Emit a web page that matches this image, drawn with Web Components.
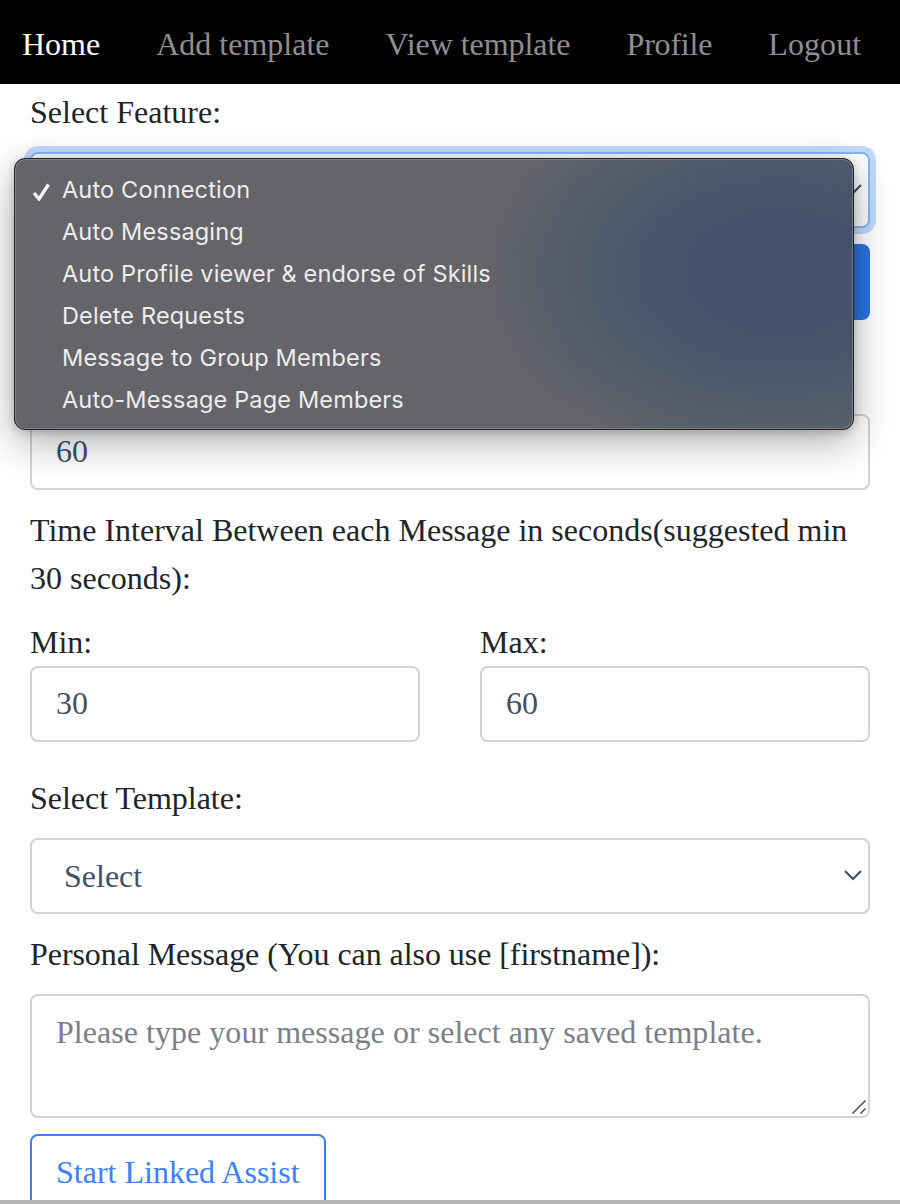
<!DOCTYPE html>
<html lang="en"><head><meta charset="utf-8"><title>Linked Assist</title>
<style>
html,body{margin:0;padding:0;height:1204px;overflow:hidden;background:#fff}
body{display:grid;grid-template-rows:1fr 4px;font:32px/48px "Liberation Serif","Times New Roman",serif;color:#212529;position:relative}
</style></head><body>
<app-shell>
  <app-nav>
    <nav-link active>Home</nav-link><nav-link>Add template</nav-link><nav-link style="letter-spacing:-.04px">View template</nav-link><nav-link style="letter-spacing:-.2px">Profile</nav-link><nav-link style="letter-spacing:.1px">Logout</nav-link>
  </app-nav>
  <form-body>
    <field-label>Select Feature:</field-label>
    <select-box focused></select-box>
    <action-row></action-row>
    <text-box style="margin-top:94px">60</text-box>
    <field-label style="margin-top:16px">Time Interval Between each Message in seconds(suggested min 30 seconds):</field-label>
    <two-cols>
      <div><field-label flush>Min:</field-label><text-box>30</text-box></div>
      <div><field-label flush>Max:</field-label><text-box>60</text-box></div>
    </two-cols>
    <field-label style="margin-top:32px;letter-spacing:-.02px">Select Template:</field-label>
    <select-box>Select</select-box>
    <field-label style="margin-top:16px;letter-spacing:-.06px">Personal Message (You can also use [firstname]):</field-label>
    <area-box>Please type your message or select any saved template.</area-box>
    <outline-button>Start Linked Assist</outline-button>
  </form-body>
</app-shell>
<window-edge></window-edge>
<feature-menu>
  <menu-option checked>Auto Connection</menu-option>
  <menu-option>Auto Messaging</menu-option>
  <menu-option>Auto Profile viewer &amp; endorse of Skills</menu-option>
  <menu-option>Delete Requests</menu-option>
  <menu-option>Message to Group Members</menu-option>
  <menu-option>Auto-Message Page Members</menu-option>
</feature-menu>
<script>
function def(name, html){
  customElements.define(name, class extends HTMLElement{
    constructor(){super();this.attachShadow({mode:'open'}).innerHTML=html;}
  });
}
const chevron='<svg class="chev" width="18" height="11" viewBox="0 0 18 11" fill="none" stroke="#3f4b5e" stroke-width="2"><path d="M1 1 L9 9 L17 1"/></svg>';
def('app-shell','<style>:host{display:block;min-height:0;overflow:hidden}</style><slot></slot>');
def('app-nav','<style>:host{display:flex;gap:56px;height:84px;box-sizing:border-box;align-items:center;padding:3px 0 0 22px;background:#000;white-space:nowrap}</style><slot></slot>');
def('nav-link','<style>:host{display:block;color:#8e8e92}:host([active]){color:#fff}</style><slot></slot>');
def('form-body','<style>:host{display:block;padding:4px 30px 0}</style><slot></slot>');
def('field-label','<style>:host{display:block;margin-bottom:16px}:host([flush]){margin-bottom:0}</style><slot></slot>');
const boxCss=':host{display:block;box-sizing:border-box;height:76px;border:2px solid #ced4da;border-radius:8px;color:#434f63;background:#fff;';
def('text-box','<style>'+boxCss+'line-height:70px;padding:0 24px}</style><slot></slot>');
def('select-box','<style>'+boxCss+'line-height:72px;padding:0 32px;position:relative}:host([focused]){border-color:#86b7fe;box-shadow:0 0 0 6px rgba(13,110,253,.25)}.chev{position:absolute;right:6px;top:30px}</style><slot></slot>'+chevron);
def('action-row','<style>:host{display:grid;grid-template-columns:1fr 390px;gap:60px;margin-top:16px;height:76px}.b{background:#2a72e3;border-radius:8px}</style><div></div><div class="b"></div>');
def('two-cols','<style>:host{display:grid;grid-template-columns:390px 390px;gap:60px;margin-top:16px}</style><slot></slot>');
def('area-box','<style>:host{display:block;box-sizing:border-box;height:124px;border:2px solid #ced4da;border-radius:8px;padding:12px 24px;color:#7b8087;position:relative;letter-spacing:.04px}svg{position:absolute;right:1px;bottom:1px}</style><slot></slot><svg width="16" height="16" viewBox="0 0 16 16" stroke="#55585e" stroke-width="1.7" fill="none"><path d="M1.5 14.5 L14.5 1.5M9.5 14.5 L14.5 9.5"/></svg>');
def('outline-button','<style>:host{display:inline-block;box-sizing:border-box;height:76px;margin-top:16px;padding:12px 24px;border:2px solid #3b82f6;border-radius:8px;color:#3b82f6}</style><slot></slot>');
def('window-edge','<style>:host{display:block;background:#b4b4b4}</style>');
def('feature-menu','<style>:host{position:absolute;left:14px;top:158px;width:840px;height:272px;box-sizing:border-box;padding:10px 0;border-radius:11px;border:1px solid #232325;background:radial-gradient(ellipse 300px 200px at 765px 113px,#44536b 0,#44536b 30%,#47556a 42%,#4e5a6a 60%,#5a5f6a 82%,#646469 100%),#646367;box-shadow:inset 0 0 0 1px rgba(255,255,255,.2),0 12px 40px rgba(0,0,0,.32),0 2px 10px rgba(0,0,0,.2);font:400 23.5px/42px Inter,"Liberation Sans",sans-serif;color:#ededee}</style><slot></slot>');
def('menu-option','<style>:host{display:block;height:42px;padding-left:47px;position:relative;white-space:nowrap;letter-spacing:.16px}svg{display:none;position:absolute;left:17px;top:14px}:host([checked]) svg{display:block}</style><svg width="19" height="18" viewBox="0 0 19 18" fill="none" stroke="#f4f4f5" stroke-width="3.4"><path d="M2 10 L7 16 L16.5 1.5"/></svg><slot></slot>');
</script>
</body></html>
